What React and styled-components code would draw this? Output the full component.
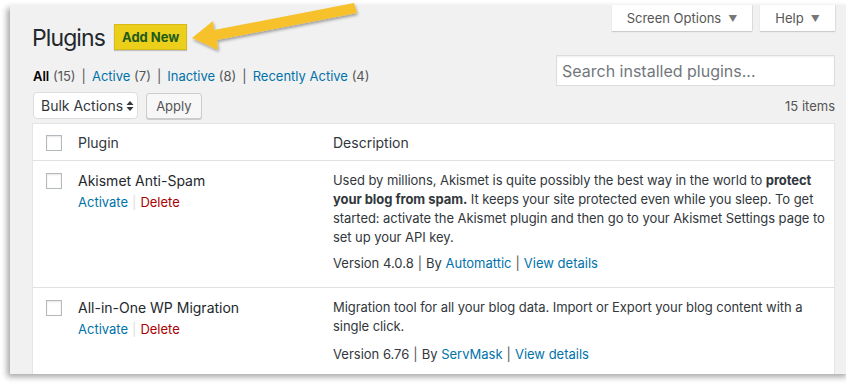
import React from "react";
import styled, { createGlobalStyle } from "styled-components";

const Global = createGlobalStyle`
  html, body { margin: 0; padding: 0; background: #fff; }
  body { font-family: Inter, "Noto Sans", sans-serif; -webkit-font-smoothing: antialiased; }
`;

const Stage = styled.div`
  position: relative;
  width: 846px;
  height: 385px;
  overflow: hidden;
  background: #fff;
`;

const Panel = styled.div`
  margin: 5px 0 0 10px;
  width: 840px;
  height: 369px;
  background: #f1f1f1;
  box-shadow: -3px 3px 6px rgba(0, 0, 0, 0.35);
  box-sizing: border-box;
  padding: 0 15px 0 22px;
  overflow: hidden;
  color: #32373c;
`;

const Header = styled.div`
  display: flex;
  justify-content: space-between;
  align-items: flex-start;
`;

const TitleGroup = styled.div`
  display: flex;
  align-items: center;
  gap: 9px;
  margin-top: 17px;
`;

const Title = styled.h1`
  margin: 0;
  padding-top: 3px;
  font-size: 23px;
  font-weight: 400;
  letter-spacing: -0.9px;
  color: #23282d;
  line-height: 26px;
`;

const AddNew = styled.span`
  display: inline-flex;
  align-items: center;
  height: 26px;
  box-sizing: border-box;
  padding: 0 7px;
  background: #ebcf1b;
  border: 1px solid #d8bb17;
  box-shadow: 0 1px 1px rgba(0, 0, 0, 0.2);
  color: #1f5b1a;
  font-weight: 700;
  font-size: 13px;
`;

const Tabs = styled.div`
  display: flex;
  gap: 8px;
`;

const Tab = styled.div`
  height: 26px;
  width: ${(p) => p.w}px;
  box-sizing: border-box;
  background: #fff;
  box-shadow: 0 1px 1px rgba(0, 0, 0, 0.15), 1px 0 1px rgba(0,0,0,0.06);
  display: flex;
  align-items: center;
  justify-content: center;
  gap: 7px;
  font-size: 13px;
  color: #555;
`;

const Caret = styled.span`
  font-size: 9px;
  color: #777;
`;

const FilterRow = styled.div`
  display: flex;
  justify-content: space-between;
  align-items: flex-end;
  margin-top: 4px;
`;

const Filters = styled.div`
  font-size: 13px;
  line-height: 20px;
  color: #555;
  margin-left: 1px;
`;

const Current = styled.b`
  color: #000;
  font-weight: 600;
`;

const Link = styled.a`
  color: ${(p) => (p.danger ? "#a00" : "#0073aa")};
  text-decoration: none;
`;

const Sep = styled.span`
  color: ${(p) => p.light ? "#ddd" : "#555"};
  margin: 0 ${(p) => p.gap || 6}px;
`;

const Search = styled.div`
  width: 279px;
  height: 31px;
  box-sizing: border-box;
  background: #fff;
  border: 1px solid #ddd;
  box-shadow: inset 0 1px 2px rgba(0, 0, 0, 0.07);
  display: flex;
  align-items: center;
  padding: 0 5px;
  font-size: 16px;
  color: #72777c;
`;

const ActionsRow = styled.div`
  display: flex;
  align-items: center;
  margin-top: 6px;
  gap: 8px;
`;

const Select = styled.div`
  height: 27px;
  box-sizing: border-box;
  background: #fff;
  border: 1px solid #ddd;
  border-radius: 4px;
  display: flex;
  align-items: center;
  padding: 0 3px 0 7px;
  gap: 3px;
  font-size: 14px;
  color: #32373c;
  margin-left: 1px;
`;

const Button = styled.div`
  height: 26px;
  box-sizing: border-box;
  background: #f7f7f7;
  border: 1px solid #ccc;
  border-radius: 3px;
  box-shadow: 0 1px 0 #ccc;
  display: flex;
  align-items: center;
  padding: 0 9px;
  font-size: 13px;
  color: #555;
`;

const Count = styled.div`
  margin-left: auto;
  font-size: 13px;
  color: #555;
`;

const Table = styled.div`
  margin-top: 4px;
  background: #fff;
  border: 1px solid #e5e5e5;
  box-shadow: 0 1px 1px rgba(0, 0, 0, 0.04);
`;

const Row = styled.div`
  display: grid;
  grid-template-columns: 45px 255px 1fr;
  border-top: ${(p) => (p.first ? "none" : "1px solid #e1e1e1")};
  padding: ${(p) => (p.head ? "9px 0 8px" : "10px 0 14px")};
`;

const CheckCell = styled.div`
  padding: 2px 0 0 13px;
`;

const Checkbox = styled.div`
  width: 16px;
  height: 16px;
  box-sizing: border-box;
  border: 1px solid #b4b9be;
  background: #fff;
  box-shadow: inset 0 1px 2px rgba(0, 0, 0, 0.1);
`;

const HeadText = styled.div`
  font-size: 14px;
  line-height: 18px;
  color: #32373c;
  padding-top: 1px;
`;

const PluginName = styled.div`
  font-size: 14px;
  line-height: 20px;
  color: #23282d;
`;

const RowActions = styled.div`
  font-size: 13px;
  line-height: 20px;
  margin-top: 1px;
`;

const Desc = styled.div`
  font-size: 13px;
  line-height: 19px;
  letter-spacing: -0.06px;
  color: #32373c;
  white-space: nowrap;
  & p {
    margin: 0;
  }
`;

const Meta = styled.div`
  margin-top: ${(p) => p.gap}px;
  font-size: 13px;
  line-height: 19px;
  color: #32373c;
`;

const ArrowSvg = styled.svg`
  position: absolute;
  left: 0;
  top: 0;
  pointer-events: none;
`;

const UpDown = () => (
  <svg width="8" height="12" viewBox="0 0 8 12">
    <path d="M4 1 L7.5 5 H0.5 Z M4 11 L7.5 7 H0.5 Z" fill="#32373c" />
  </svg>
);

const plugins = [
  {
    name: "Akismet Anti-Spam",
    desc: [
      <>Used by millions, Akismet is quite possibly the best way in the world to <b>protect</b></>,
      <><b>your blog from spam.</b> It keeps your site protected even while you sleep. To get</>,
      <>started: activate the Akismet plugin and then go to your Akismet Settings page to</>,
      <>set up your API key.</>,
    ],
    version: "4.0.8",
    author: "Automattic",
    metaGap: 7,
  },
  {
    name: "All-in-One WP Migration",
    desc: [
      <>Migration tool for all your blog data. Import or Export your blog content with a</>,
      <>single click.</>,
    ],
    version: "6.76",
    author: "ServMask",
    metaGap: 9,
  },
];

export default function App() {
  return (
    <Stage>
      <Global />
      <Panel>
        <Header>
          <TitleGroup>
            <Title>Plugins</Title>
            <AddNew>Add New</AddNew>
          </TitleGroup>
          <Tabs>
            <Tab w={140}>Screen Options <Caret>▼</Caret></Tab>
            <Tab w={75}>Help <Caret>▼</Caret></Tab>
          </Tabs>
        </Header>
        <FilterRow>
          <Filters>
            <Current>All</Current> (15)<Sep>|</Sep>
            <Link>Active</Link> (7)<Sep>|</Sep>
            <Link>Inactive</Link> (8)<Sep>|</Sep>
            <Link>Recently Active</Link> (4)
          </Filters>
          <Search>Search installed plugins...</Search>
        </FilterRow>
        <ActionsRow>
          <Select>Bulk Actions <UpDown /></Select>
          <Button>Apply</Button>
          <Count>15 items</Count>
        </ActionsRow>
        <Table>
          <Row head first>
            <CheckCell><Checkbox /></CheckCell>
            <HeadText>Plugin</HeadText>
            <HeadText>Description</HeadText>
          </Row>
          {plugins.map((p) => (
            <Row key={p.name}>
              <CheckCell><Checkbox /></CheckCell>
              <div>
                <PluginName>{p.name}</PluginName>
                <RowActions>
                  <Link>Activate</Link>
                  <Sep light gap={4}>|</Sep>
                  <Link danger>Delete</Link>
                </RowActions>
              </div>
              <div>
                <Desc>
                  {p.desc.map((line, i) => (
                    <p key={i}>{line}</p>
                  ))}
                </Desc>
                <Meta gap={p.metaGap}>
                  Version {p.version}<Sep gap={4}>|</Sep>By <Link>{p.author}</Link>
                  <Sep gap={4}>|</Sep><Link>View details</Link>
                </Meta>
              </div>
            </Row>
          ))}
        </Table>
      </Panel>
      <ArrowSvg width="846" height="385" viewBox="0 0 846 385">
        <defs>
          <filter id="sh" x="-10%" y="-30%" width="130%" height="180%">
            <feDropShadow dx="1" dy="2" stdDeviation="1.5" floodColor="#000" floodOpacity="0.35" />
          </filter>
        </defs>
        <path
          d="M192 38 L213 21 L214 30 L354 3 L357 13 L217 40 L218 50 Z"
          fill="#f6c12c"
          filter="url(#sh)"
        />
      </ArrowSvg>
    </Stage>
  );
}
